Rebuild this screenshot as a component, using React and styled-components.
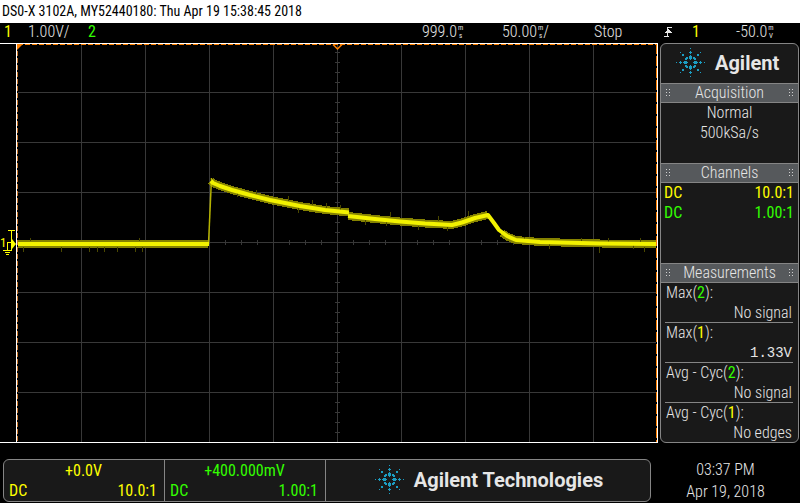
import React from 'react';
import styled, { createGlobalStyle } from 'styled-components';

const YELLOW = '#ffff00';
const GREEN = '#33ff00';
const ORANGE = '#ff8000';
const LINE = '#858585';
const PANEL = '#191919';
const GRID = '#383838';

const Global = createGlobalStyle`
  * { box-sizing: border-box; }
  body {
    margin: 0;
    background: #000;
    color: #e6e6e6;
    font: 300 16px/20px "Roboto Condensed", "Liberation Sans Narrow", Roboto, sans-serif;
  }
`;

const Screen = styled.div`
  display: flex;
  flex-direction: column;
  min-height: 100vh;
`;

const Title = styled.h1`
  margin: 0;
  padding: 0 2px;
  background: #fff;
  color: #000;
  font-size: 14px;
  font-weight: 400;
  line-height: 23px;
`;

const StatusBar = styled.header`
  display: grid;
  grid-template-columns: 20px 60px 1fr 80px 92px 70px 28px 44px 52px;
  padding: 0 12px 0 4px;
  line-height: 18px;
  height: 20px;
  white-space: nowrap;
`;

const Cell = styled.span`
  display: flex;
  align-items: center;
  height: 18px;
  color: ${(p) => p.$color || 'inherit'};
  font-weight: ${(p) => (p.$color ? 400 : 300)};
  padding-left: ${(p) => (p.$inset ? 4 : 0)}px;
`;

const Stack = styled.span`
  display: flex;
  flex-direction: column;
  align-items: center;
  padding-left: 1px;
  font-size: 7px;
  line-height: 8px;
  font-weight: 400;
`;

const Main = styled.main`
  display: grid;
  grid-template-columns: 1fr 139px;
  column-gap: 2px;
  padding-right: 1px;
`;

const Plot = styled.svg`
  display: block;
  width: 100%;
`;

const MarkerLabel = styled.text`
  font-size: 13px;
  font-weight: 400;
  fill: ${YELLOW};
`;

const Sidebar = styled.aside`
  display: flex;
  flex-direction: column;
  border: 1px solid ${LINE};
  border-radius: 6px;
  background: ${PANEL};
  overflow: hidden;
`;

const SideBrand = styled.div`
  display: flex;
  align-items: center;
  gap: 10px;
  height: 39px;
  padding: 0 15px 2px;
`;

const BrandName = styled.span`
  font: 700 20px/24px Roboto, "Liberation Sans", sans-serif;
  white-space: nowrap;
`;

const SectionBar = styled.h2`
  display: flex;
  align-items: center;
  justify-content: space-between;
  margin: 0;
  padding: 0 4px;
  height: 20px;
  border: solid ${LINE};
  border-width: 1px 0;
  background: #56595c;
  font-size: 16px;
  font-weight: 300;
  line-height: 18px;
`;

const SectionBody = styled.div`
  min-height: ${(p) => p.$min}px;
  text-align: center;
`;

const Info = styled.p`
  margin: 0;
`;

const Pair = styled.div`
  display: flex;
  justify-content: space-between;
  padding: 0 4px 0 3px;
  color: ${(p) => p.$color};
  font-weight: 400;
`;

const Readings = styled.dl`
  margin: 0;
  padding: 0 5px 0 4px;
`;

const Reading = styled.div`
  height: 40px;
  padding: 0 1px;
  border-bottom: 1px solid ${LINE};
  &:last-child { border-bottom: 0; height: 39px; }
`;

const Term = styled.dt`
  line-height: 20px;
`;

const Value = styled.dd`
  margin: 0;
  text-align: right;
  line-height: 20px;
`;

const Digits = styled.span`
  display: block;
  font: 400 14px/20px "Liberation Mono", monospace;
`;

const Ch = styled.span`
  color: ${(p) => p.$color};
  font-weight: 400;
`;

const Footer = styled.footer`
  display: grid;
  grid-template-columns: 1fr 149px;
  padding: 16px 0 1px 3px;
`;

const FooterPanel = styled.div`
  display: grid;
  grid-template-columns: 161fr 161fr 324fr;
  height: 43px;
  border: 1px solid ${LINE};
  border-radius: 6px;
  background: ${PANEL};
`;

const Channel = styled.section`
  border-right: 1px solid ${LINE};
  color: ${(p) => p.$color};
  text-align: center;
  font-weight: 400;
  padding: 1px 3px 0 2px;
`;

const FooterBrand = styled.div`
  display: flex;
  align-items: center;
  justify-content: center;
  gap: 10px;
  padding: 0 0 2px 2px;
`;

const Clock = styled.time`
  display: block;
  text-align: center;
  line-height: 22px;
`;

const sparkDots = [0, 90, 180, 270].flatMap((deg) => {
  const [c, s] = [[1, 0], [0, 1], [-1, 0], [0, -1]][deg / 90];
  const turn = (x, y) => [x * c - y * s, x * s + y * c];
  return [
    [14, 0, 1, 1], [10, 0, 3, 1], [10, 0, 1, 3], [5, 0, 3, 3], [5, 0, 5, 1],
    [10, 10, 1, 1], [7.5, 7.5, 2, 2], [4.5, 3.5, 2, 2], [3.5, 4.5, 2, 2],
  ].map(([x, y, w, h]) => {
    const [cx, cy] = turn(x, y);
    const [rw, rh] = s ? [h, w] : [w, h];
    return { x: cx - rw / 2, y: cy - rh / 2, w: rw, h: rh };
  });
});

function Spark() {
  return (
    <svg width="29" height="29" viewBox="-14.5 -14.5 29 29" fill="#1c9dc2" shapeRendering="crispEdges" aria-hidden="true">
      {sparkDots.map((d, i) => <rect key={i} x={d.x} y={d.y} width={d.w} height={d.h} />)}
    </svg>
  );
}

function Grip() {
  return (
    <svg width="6" height="8" viewBox="0 0 6 8" fill="#d0d0d0" shapeRendering="crispEdges" aria-hidden="true">
      {[0, 3, 6].flatMap((y) => [1, 4].map((x) => <rect key={`${x}-${y}`} x={x} y={y} width="1" height="1" />))}
    </svg>
  );
}

function TriggerEdge() {
  return (
    <svg width="8" height="12" viewBox="0 0 8 12" fill="none" stroke="#e6e6e6" strokeWidth="1" shapeRendering="crispEdges" role="img" aria-label="Rising edge">
      <path d="M0 10.5H4.5M3.5 11V1M3 1.5H8" />
      <path d="M4 3L8 7H0Z" fill="#e6e6e6" stroke="none" />
    </svg>
  );
}

const tail =
  'M348 173L375 176L400 178.500L425 180.500L452 182L462 179.500L475 175L488 172';
const noisy =
  `M18 201H208M211 138L213 140L220 143L232 147L250 152L270 157L300 163L325 167L349 169.500${tail}M502 190L508 194L516 197L540 199L600 200.500L656 201`;
const trace =
  `M18 201H209M211 138L213 140L220 143L232 147L250 152L270 157L300 163L325 167L349 169.500${tail}L494 180L499 187L507 193L516 197L540 199L600 200.500L656 201`;

const spikes = [
  [30, 195, 3], [23, 204, 5], [61, 204, 5], [89, 204, 5], [97, 204, 5], [104, 204, 5], [117, 204, 5],
  [135, 204, 5], [139, 195, 3], [142, 204, 5], [237, 149, 5], [256, 147, 4], [288, 153, 5], [298, 165, 5],
  [312, 157, 5], [326, 160, 5], [340, 162, 5], [365, 177, 5], [386, 179, 4], [390, 169, 5], [418, 183, 4],
  [438, 173, 5], [447, 184, 4], [468, 168, 5], [524, 194, 5], [549, 201, 5], [581, 195, 4], [599, 204, 6],
  [608, 195, 4], [633, 201, 5], [640, 195, 4], [644, 204, 5],
];

function Waveform() {
  const cols = [81, 145, 209, 273, 337, 401, 465, 529, 593];
  const rows = [49, 99, 149, 199, 249, 299, 349];
  const xTicks = Array.from({ length: 39 }, (_, i) => 33 + i * 16);
  const yTicks = Array.from({ length: 39 }, (_, i) => 9 + i * 10);
  return (
    <Plot viewBox="0 0 658 400" role="img" aria-label="Oscilloscope waveform, channel 1">
      <g fill="none" stroke={GRID} shapeRendering="crispEdges">
        {cols.map((x) => <path key={x} d={`M${x + 0.5} 2V399`} />)}
        {rows.map((y) => <path key={y} d={`M18 ${y + 0.5}H656`} />)}
        {xTicks.map((x) => <path key={x} d={`M${x + 0.5} 197V202`} />)}
        {yTicks.map((y) => <path key={y} d={`M335 ${y + 0.5}H340`} />)}
      </g>
      <g fill="none" stroke="#fff" shapeRendering="crispEdges">
        <path d="M0 0.500H657.500V399.500H0" />
        <path d="M16.500 1V399" />
      </g>
      <g fill="none" stroke={ORANGE} shapeRendering="crispEdges">
        <path d="M18 1.500H656" strokeDasharray="5 2" />
        <path d="M17.500 1V399" strokeDasharray="5 2" stroke="#c8742a" />
        <path d="M656.500 1V399" strokeDasharray="10 2" />
      </g>
      <path d="M17 1H23L17 7Z" fill={ORANGE} />
      <path d="M333 1.500L337.500 6L342 1.500" fill="none" stroke={ORANGE} strokeWidth="1.500" />
      <g fill="none" stroke="#858200" strokeLinejoin="round">
        <path d={noisy} strokeWidth="8" shapeRendering="crispEdges" />
        {spikes.map(([x, y, h]) => <path key={x} d={`M${x + 0.5} ${y}v${h}`} stroke="#4a4800" shapeRendering="crispEdges" />)}
        <path d="M208.500 201L211.500 135" strokeWidth="1.500" stroke="#b5b200" />
      </g>
      <path d={trace} fill="none" stroke="#f2f200" strokeWidth="4" strokeLinejoin="round" />
      <MarkerLabel x="0" y="204">1</MarkerLabel>
      <g fill="none" stroke={YELLOW} shapeRendering="crispEdges">
        <path d="M8 187.500H15M11.500 188V207M7.500 207V199.500H12" />
        <path d="M3 207.500H12M5 209.500H10M6 211.500H9" />
      </g>
      <path d="M12 196L16 201L12 206Z" fill={YELLOW} />
    </Plot>
  );
}

function Unit({ a, b }) {
  return <Stack><span>{a}</span><span>{b}</span></Stack>;
}

function Section({ title, min, children }) {
  return (
    <section>
      <SectionBar><Grip />{title}<Grip /></SectionBar>
      <SectionBody $min={min}>{children}</SectionBody>
    </section>
  );
}

const readings = [
  { name: 'Max', ch: 2, value: 'No signal' },
  { name: 'Max', ch: 1, value: '1.33V', numeric: true },
  { name: 'Avg - Cyc', ch: 2, value: 'No signal' },
  { name: 'Avg - Cyc', ch: 1, value: 'No edges' },
];

export default function App() {
  return (
    <Screen>
      <Global />
      <Title>DS0-X 3102A, MY52440180: Thu Apr 19 15:38:45 2018</Title>
      <StatusBar>
        <Cell $color={YELLOW}>1</Cell>
        <Cell $inset>1.00V/</Cell>
        <Cell $color={GREEN} $inset>2</Cell>
        <Cell>999.0<Unit a="m" b="s" /></Cell>
        <Cell>50.00<Unit a="m" b="s" />/</Cell>
        <Cell>Stop</Cell>
        <Cell><TriggerEdge /></Cell>
        <Cell $color={YELLOW}>1</Cell>
        <Cell>-50.0<Unit a="m" b="V" /></Cell>
      </StatusBar>
      <Main>
        <Waveform />
        <Sidebar>
          <SideBrand><Spark /><BrandName>Agilent</BrandName></SideBrand>
          <Section title="Acquisition" min={60}>
            <Info>Normal</Info>
            <Info>500kSa/s</Info>
          </Section>
          <Section title="Channels" min={80}>
            <Pair $color={YELLOW}><span>DC</span><span>10.0:1</span></Pair>
            <Pair $color={GREEN}><span>DC</span><span>1.00:1</span></Pair>
          </Section>
          <section>
            <SectionBar><Grip />Measurements<Grip /></SectionBar>
            <Readings>
              {readings.map((r) => (
                <Reading key={r.name + r.ch}>
                  <Term>{r.name}(<Ch $color={r.ch === 1 ? YELLOW : GREEN}>{r.ch}</Ch>):</Term>
                  <Value>{r.numeric ? <Digits>{r.value}</Digits> : r.value}</Value>
                </Reading>
              ))}
            </Readings>
          </section>
        </Sidebar>
      </Main>
      <Footer>
        <FooterPanel>
          <Channel $color={YELLOW}>
            +0.0V
            <Pair><span>DC</span><span>10.0:1</span></Pair>
          </Channel>
          <Channel $color={GREEN}>
            +400.000mV
            <Pair><span>DC</span><span>1.00:1</span></Pair>
          </Channel>
          <FooterBrand><Spark /><BrandName>Agilent Technologies</BrandName></FooterBrand>
        </FooterPanel>
        <div>
          <Clock>03:37 PM</Clock>
          <Clock>Apr 19, 2018</Clock>
        </div>
      </Footer>
    </Screen>
  );
}
